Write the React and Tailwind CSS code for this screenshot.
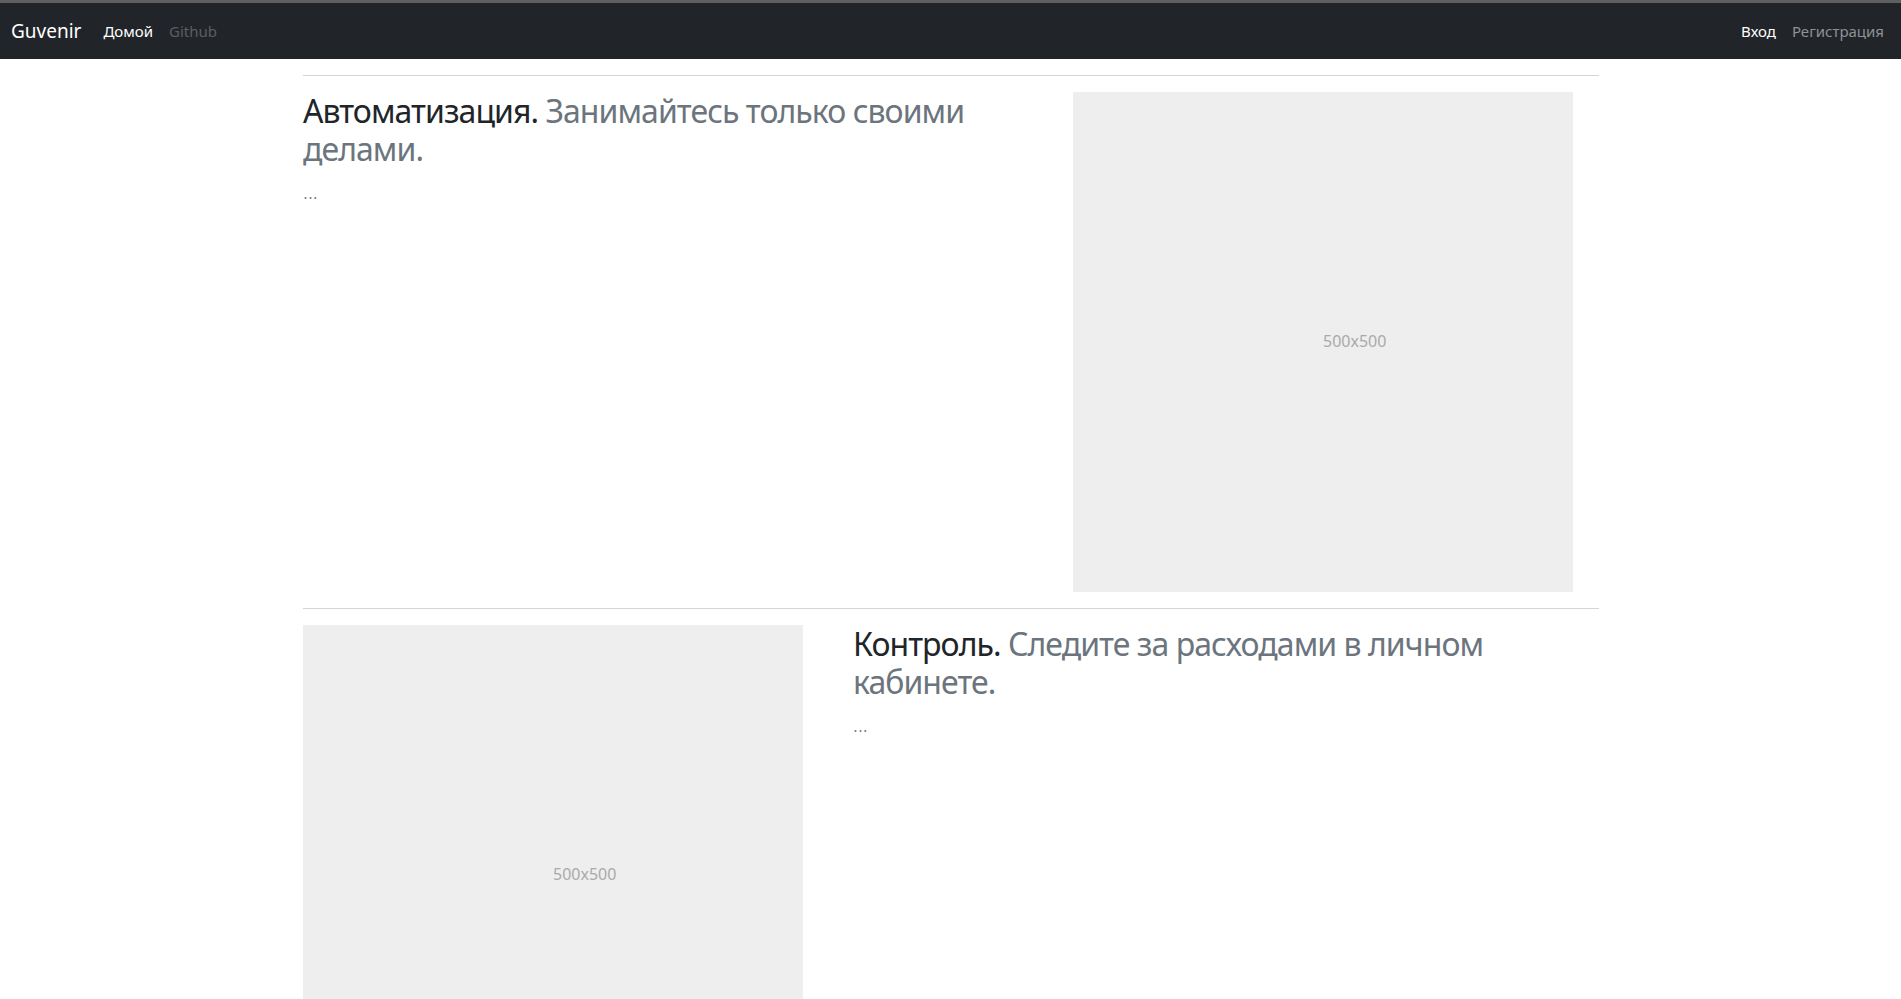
export default function App() {
  const font = { fontFamily: '"Noto Sans", "Open Sans", sans-serif' };
  const Placeholder = () => (
    <svg width="500" height="500" className="block shrink-0">
      <rect width="100%" height="100%" fill="#eeeeee" />
      <text x="50%" y="50%" fill="#aaaaaa" dy=".3em" fontSize="16" style={font}>
        500x500
      </text>
    </svg>
  );
  return (
    <div className="min-h-screen bg-white font-['Noto_Sans',sans-serif]">
      <div className="border-t-[3px] border-[#5f5f5f] bg-[#212529]">
        <nav className="flex h-[56px] items-center justify-between px-[11px]">
          <div className="flex items-center">
            <span className="mr-[22px] text-[19px] leading-[30px] text-white">Guvenir</span>
            <span className="mr-[16px] text-[15px] text-white">Домой</span>
            <span className="text-[15px] text-[#5b5e62]">Github</span>
          </div>
          <div className="flex items-center pr-[6px]">
            <span className="mr-[16px] text-[15px] text-white">Вход</span>
            <span className="text-[15px] text-[#8f9194]">Регистрация</span>
          </div>
        </nav>
      </div>

      <div className="mx-auto w-[1297px] pl-px">
        <hr className="mt-[16px] mb-[16px] border-t border-[#d4d4d4]" />
        <div className="flex">
          <div className="flex-1 pr-[30px]">
            <h2 className="text-[32px] leading-[38.4px] tracking-[-0.95px] text-[#212529]">
              <span>Автоматизация. </span>
              <span className="text-[#6c757d]">Занимайтесь только своими </span>
              <span className="text-[#6c757d]">делами.</span>
            </h2>
            <p className="mt-[8px] text-[20px] font-light leading-[30px] text-[#6c757d]">...</p>
          </div>
          <div className="mr-[26px]">
            <Placeholder />
          </div>
        </div>

        <hr className="mt-[16px] mb-[16px] border-t border-[#d4d4d4]" />
        <div className="flex">
          <div className="mr-[50px]">
            <Placeholder />
          </div>
          <div className="flex-1 pr-[20px]">
            <h2 className="text-[32px] leading-[38.4px] tracking-[-0.95px] text-[#212529]">
              <span>Контроль. </span>
              <span className="text-[#6c757d]">Следите за расходами в личном </span>
              <span className="text-[#6c757d]">кабинете.</span>
            </h2>
            <p className="mt-[8px] text-[20px] font-light leading-[30px] text-[#6c757d]">...</p>
          </div>
        </div>
        <hr className="mt-[16px] mb-[16px] border-t border-[#d4d4d4]" />
      </div>
    </div>
  );
}
